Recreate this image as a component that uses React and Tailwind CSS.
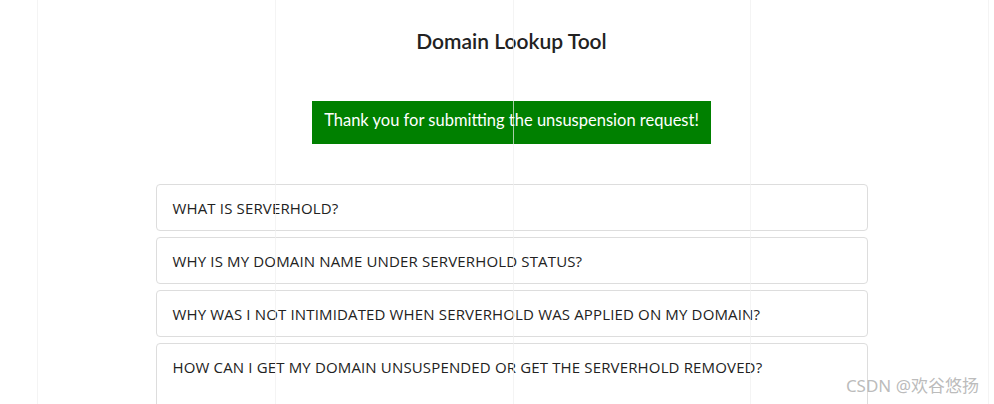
import React from 'react';

const questions = [
  'What is serverhold?',
  'Why is my domain name under serverhold status?',
  'Why was I not intimidated when serverhold was applied on my domain?',
  'How can I get my domain unsuspended or get the serverhold removed?',
];

export default function App() {
  return (
    <div className="relative h-[404px] w-full overflow-hidden bg-white">
      <div className="ml-[36px] flex w-[951px] flex-col items-center pt-[27px]">
        <h1 className="text-[21px] leading-[28px] font-semibold text-[#222] [font-family:Lato,sans-serif]">
          Domain Lookup Tool
        </h1>
        <div className="mt-[46px] flex h-[43px] items-center bg-[#008000] px-3 pb-[4px] text-[16.5px] text-white [font-family:Lato,sans-serif]">
          Thank you for submitting the unsuspension request!
        </div>
        <div className="mt-[40px] flex w-[712px] flex-col gap-[6px]">
          {questions.map((q, i) => (
            <div
              key={q}
              className={
                i === questions.length - 1
                  ? "rounded border border-[#ddd] px-4 pt-[13px] pb-[40px] text-[15px] leading-[20px] tracking-[0.15px] uppercase text-[#222] [font-family:'Open_Sans',sans-serif]"
                  : "rounded border border-[#ddd] px-4 pt-[13px] pb-[12px] text-[15px] leading-[20px] tracking-[0.15px] uppercase text-[#222] [font-family:'Open_Sans',sans-serif]"
              }
            >
              {q}
            </div>
          ))}
        </div>
      </div>

      {/* faint column guides over the page */}
      <div className="pointer-events-none absolute top-0 left-[37px] flex h-full w-[952px]">
        <div className="flex-1 border-l border-[#f0f0f0]/70" />
        <div className="flex-1 border-l border-[#f0f0f0]/70" />
        <div className="flex-1 border-l border-[#f0f0f0]/70" />
        <div className="flex-1 border-x border-[#f0f0f0]/70" />
      </div>

      <div className="absolute right-[15px] bottom-[6px] text-[17px] text-[#aaa]/80 [font-family:'Noto_Sans','Noto_Sans_CJK_SC',sans-serif]">
        CSDN @欢谷悠扬
      </div>
    </div>
  );
}
